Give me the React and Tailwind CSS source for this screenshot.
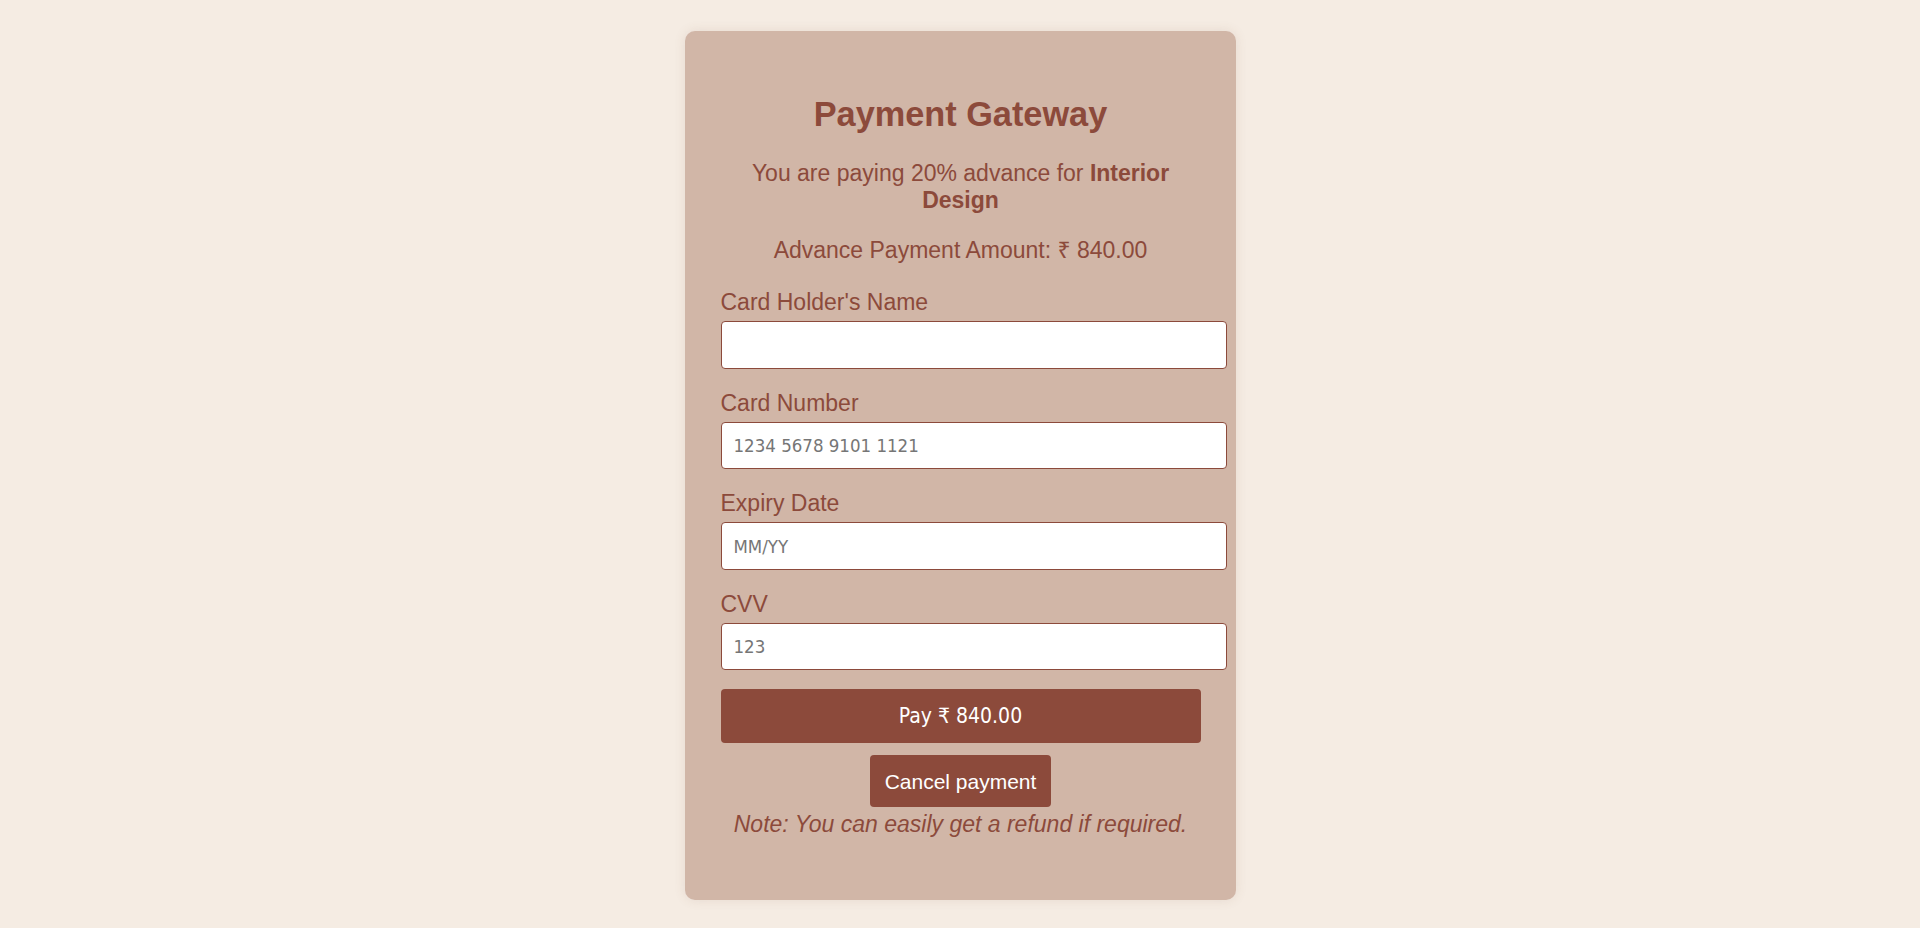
import { useState } from 'react';

const fields = [
  { label: "Card Holder's Name", placeholder: '' },
  { label: 'Card Number', placeholder: '1234 5678 9101 1121' },
  { label: 'Expiry Date', placeholder: 'MM/YY' },
  { label: 'CVV', placeholder: '123' },
];

export default function App() {
  const [values, setValues] = useState({});

  return (
    <div className="min-h-[928px] bg-[#f5ece3] pt-[31px] font-['Liberation_Sans','Noto_Sans',Arial,sans-serif] text-[#8c4a3b]">
      <div className="mx-auto flex w-[551px] flex-col rounded-[10px] bg-[#d1b6a7] pt-[64px] pb-[63px] pl-[36px] pr-[35px] shadow-[0_0_12px_rgba(120,80,60,0.12)]">
        <h1 className="text-center text-[34.3px] font-bold leading-[39px]">Payment Gateway</h1>
        <p className="mt-[26px] px-[20px] text-center text-[23px] leading-[26.7px]">
          You are paying 20% advance for <strong className="font-bold">Interior Design</strong>
        </p>
        <p className="mt-[24px] text-center text-[23px] leading-[26px]">Advance Payment Amount: ₹ 840.00</p>

        <div className="mt-[26px] flex flex-col">
          {fields.map((f, i) => (
            <div key={f.label} className={i === 0 ? 'flex flex-col' : 'mt-[21px] flex flex-col'}>
              <label className="text-[23px] leading-[26px]">{f.label}</label>
              <input
                type="text"
                placeholder={f.placeholder}
                value={values[f.label] || ''}
                onChange={(e) => setValues({ ...values, [f.label]: e.target.value })}
                className="mt-[6px] h-[47.5px] w-[506px] rounded-[4px] border border-[#8c4a3b] bg-white px-[12px] font-['DejaVu_Sans_Condensed','DejaVu_Sans',sans-serif] text-[18.5px] text-[#333] outline-none placeholder:text-[#767676]"
              />
            </div>
          ))}
        </div>

        <button className="mt-[19px] h-[54px] w-[480px] rounded-[4px] bg-[#8c4a3b] font-['DejaVu_Sans_Condensed','DejaVu_Sans',sans-serif] text-[21px] text-white">
          Pay ₹ 840.00
        </button>
        <button className="mx-auto mt-[12px] h-[52px] rounded-[4px] bg-[#8c4a3b] px-[15px] text-[21px] text-white">
          Cancel payment
        </button>
        <p className="mt-[4px] text-center text-[23px] italic leading-[26px]">
          Note: You can easily get a refund if required.
        </p>
      </div>
    </div>
  );
}
